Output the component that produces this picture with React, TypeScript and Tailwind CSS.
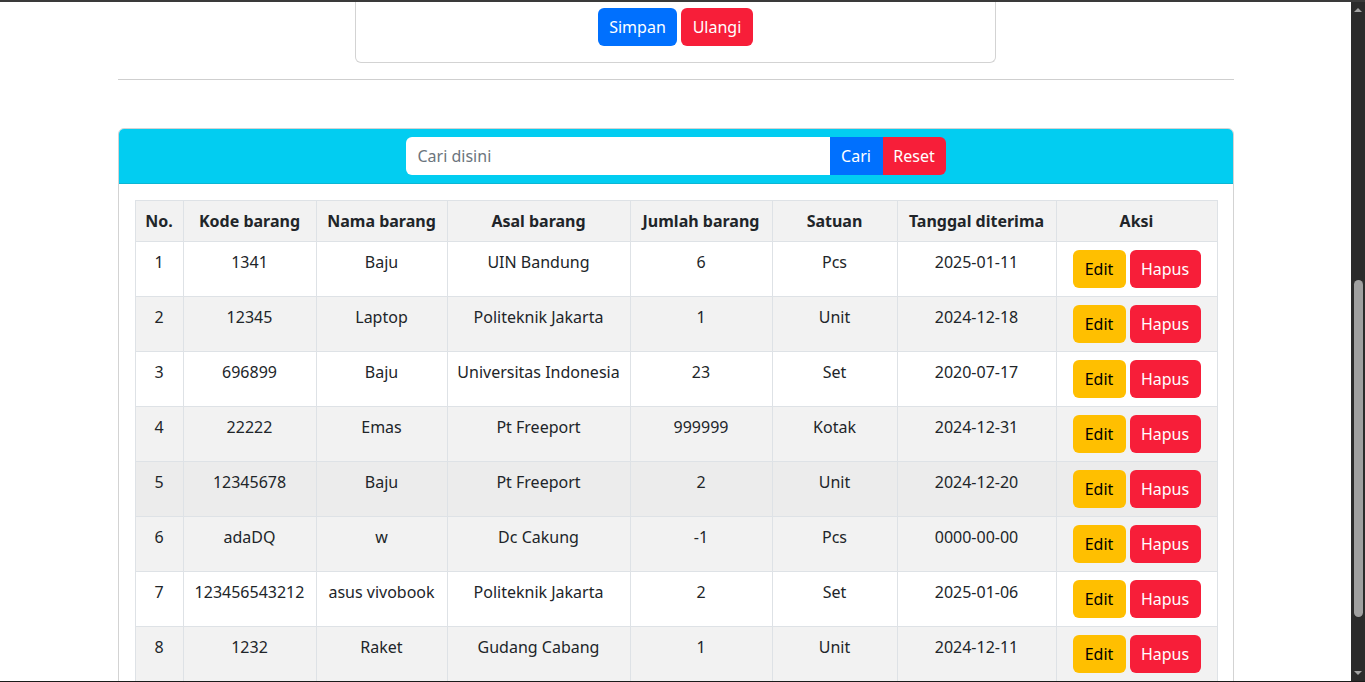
import React from "react";

interface Barang {
	no: number;
	kode: string;
	nama: string;
	asal: string;
	jumlah: string;
	satuan: string;
	tanggal: string;
}

const data: Barang[] = [
	{ no: 1, kode: "1341", nama: "Baju", asal: "UIN Bandung", jumlah: "6", satuan: "Pcs", tanggal: "2025-01-11" },
	{ no: 2, kode: "12345", nama: "Laptop", asal: "Politeknik Jakarta", jumlah: "1", satuan: "Unit", tanggal: "2024-12-18" },
	{ no: 3, kode: "696899", nama: "Baju", asal: "Universitas Indonesia", jumlah: "23", satuan: "Set", tanggal: "2020-07-17" },
	{ no: 4, kode: "22222", nama: "Emas", asal: "Pt Freeport", jumlah: "999999", satuan: "Kotak", tanggal: "2024-12-31" },
	{ no: 5, kode: "12345678", nama: "Baju", asal: "Pt Freeport", jumlah: "2", satuan: "Unit", tanggal: "2024-12-20" },
	{ no: 6, kode: "adaDQ", nama: "w", asal: "Dc Cakung", jumlah: "-1", satuan: "Pcs", tanggal: "0000-00-00" },
	{ no: 7, kode: "123456543212", nama: "asus vivobook", asal: "Politeknik Jakarta", jumlah: "2", satuan: "Set", tanggal: "2025-01-06" },
	{ no: 8, kode: "1232", nama: "Raket", asal: "Gudang Cabang", jumlah: "1", satuan: "Unit", tanggal: "2024-12-11" },
];

const headers = ["No.", "Kode barang", "Nama barang", "Asal barang", "Jumlah barang", "Satuan", "Tanggal diterima", "Aksi"];
const colWidths = [48, 133, 131, 183, 142, 125, 159, 161];

const rowBg = (no: number) => {
	if (no === 5) return "bg-[#ececec]";
	return no % 2 === 0 ? "bg-[#f2f2f2]" : "bg-white";
};

const Cell = ({ children }: { children: React.ReactNode }) => (
	<td className="border border-[#dee2e6] px-2 pt-2 pb-2 align-top text-center whitespace-nowrap">{children}</td>
);

const ScrollBar = () => (
	<div className="w-[14px] bg-[#2b2b2b] flex flex-col items-center">
		<div className="h-[16px] flex items-center justify-center">
			<div className="w-0 h-0 border-x-[4px] border-x-transparent border-b-[4px] border-b-[#a3a3a3]" />
		</div>
		<div className="mt-[262px] w-[9px] h-[337px] rounded-full bg-[#a0a0a0]" />
		<div className="flex-1" />
		<div className="h-[16px] flex items-center justify-center">
			<div className="w-0 h-0 border-x-[4px] border-x-transparent border-t-[4px] border-t-[#a3a3a3]" />
		</div>
	</div>
);

const App = () => {
	return (
		<div className="w-[1365px] h-[682px] flex flex-col overflow-hidden bg-white text-[#212529] text-base leading-6 font-['Segoe_UI','Noto_Sans',sans-serif]">
			<div className="h-[2px] bg-[#3a3a3a]" />
			<div className="flex flex-1 min-h-0">
				<main className="flex-1 overflow-hidden">
					<div className="w-[1140px] mx-auto px-3">
						{/* form card, scrolled so only its bottom shows */}
						<div className="w-[641px] mx-auto border-x border-b border-[#d3d3d3] rounded-b-md pt-[6px] pb-4 flex justify-center gap-1">
							<button className="w-[79px] h-[38px] rounded-md bg-[#0070fe] text-white">Simpan</button>
							<button className="w-[72px] h-[38px] rounded-md bg-[#f71e39] text-white">Ulangi</button>
						</div>

						<hr className="mt-4 mb-12 border-t border-[#cfcfcf]" />

						<div className="border border-[#d3d3d3] rounded-md">
							<div className="bg-[#02cdf1] rounded-t-[5px] border-b border-[#0bb6d4] py-2 px-4">
								<div className="w-[540px] mx-auto flex h-[38px]">
									<input
										placeholder="Cari disini"
										className="flex-1 min-w-0 rounded-l-md bg-white px-3 outline-none placeholder:text-[#6c757d]"
									/>
									<button className="w-[53px] bg-[#0070fe] text-white">Cari</button>
									<button className="w-[63px] bg-[#f71e39] text-white rounded-r-md">Reset</button>
								</div>
							</div>
							<div className="p-4">
								<table className="w-full table-fixed border-collapse">
									<colgroup>
										{colWidths.map((w, i) => (
											<col key={i} style={{ width: w }} />
										))}
									</colgroup>
									<thead>
										<tr className="bg-[#f2f2f2]">
											{headers.map((h) => (
												<th key={h} className="border border-[#dee2e6] px-2 py-2 font-bold text-center whitespace-nowrap">
													{h}
												</th>
											))}
										</tr>
									</thead>
									<tbody>
										{data.map((r) => (
											<tr key={r.no} className={rowBg(r.no)}>
												<Cell>{r.no}</Cell>
												<Cell>{r.kode}</Cell>
												<Cell>{r.nama}</Cell>
												<Cell>{r.asal}</Cell>
												<Cell>{r.jumlah}</Cell>
												<Cell>{r.satuan}</Cell>
												<Cell>{r.tanggal}</Cell>
												<td className="border border-[#dee2e6] px-2 py-2 align-top">
													<div className="flex justify-center gap-1">
														<button className="w-[53px] h-[38px] rounded-md bg-[#ffbf00] text-black">Edit</button>
														<button className="w-[71px] h-[38px] rounded-md bg-[#f71e39] text-white">Hapus</button>
													</div>
												</td>
											</tr>
										))}
									</tbody>
								</table>
							</div>
						</div>
					</div>
				</main>
				<ScrollBar />
			</div>
			<div className="h-px bg-[#1a1a1a]" />
		</div>
	);
};

export default App;
